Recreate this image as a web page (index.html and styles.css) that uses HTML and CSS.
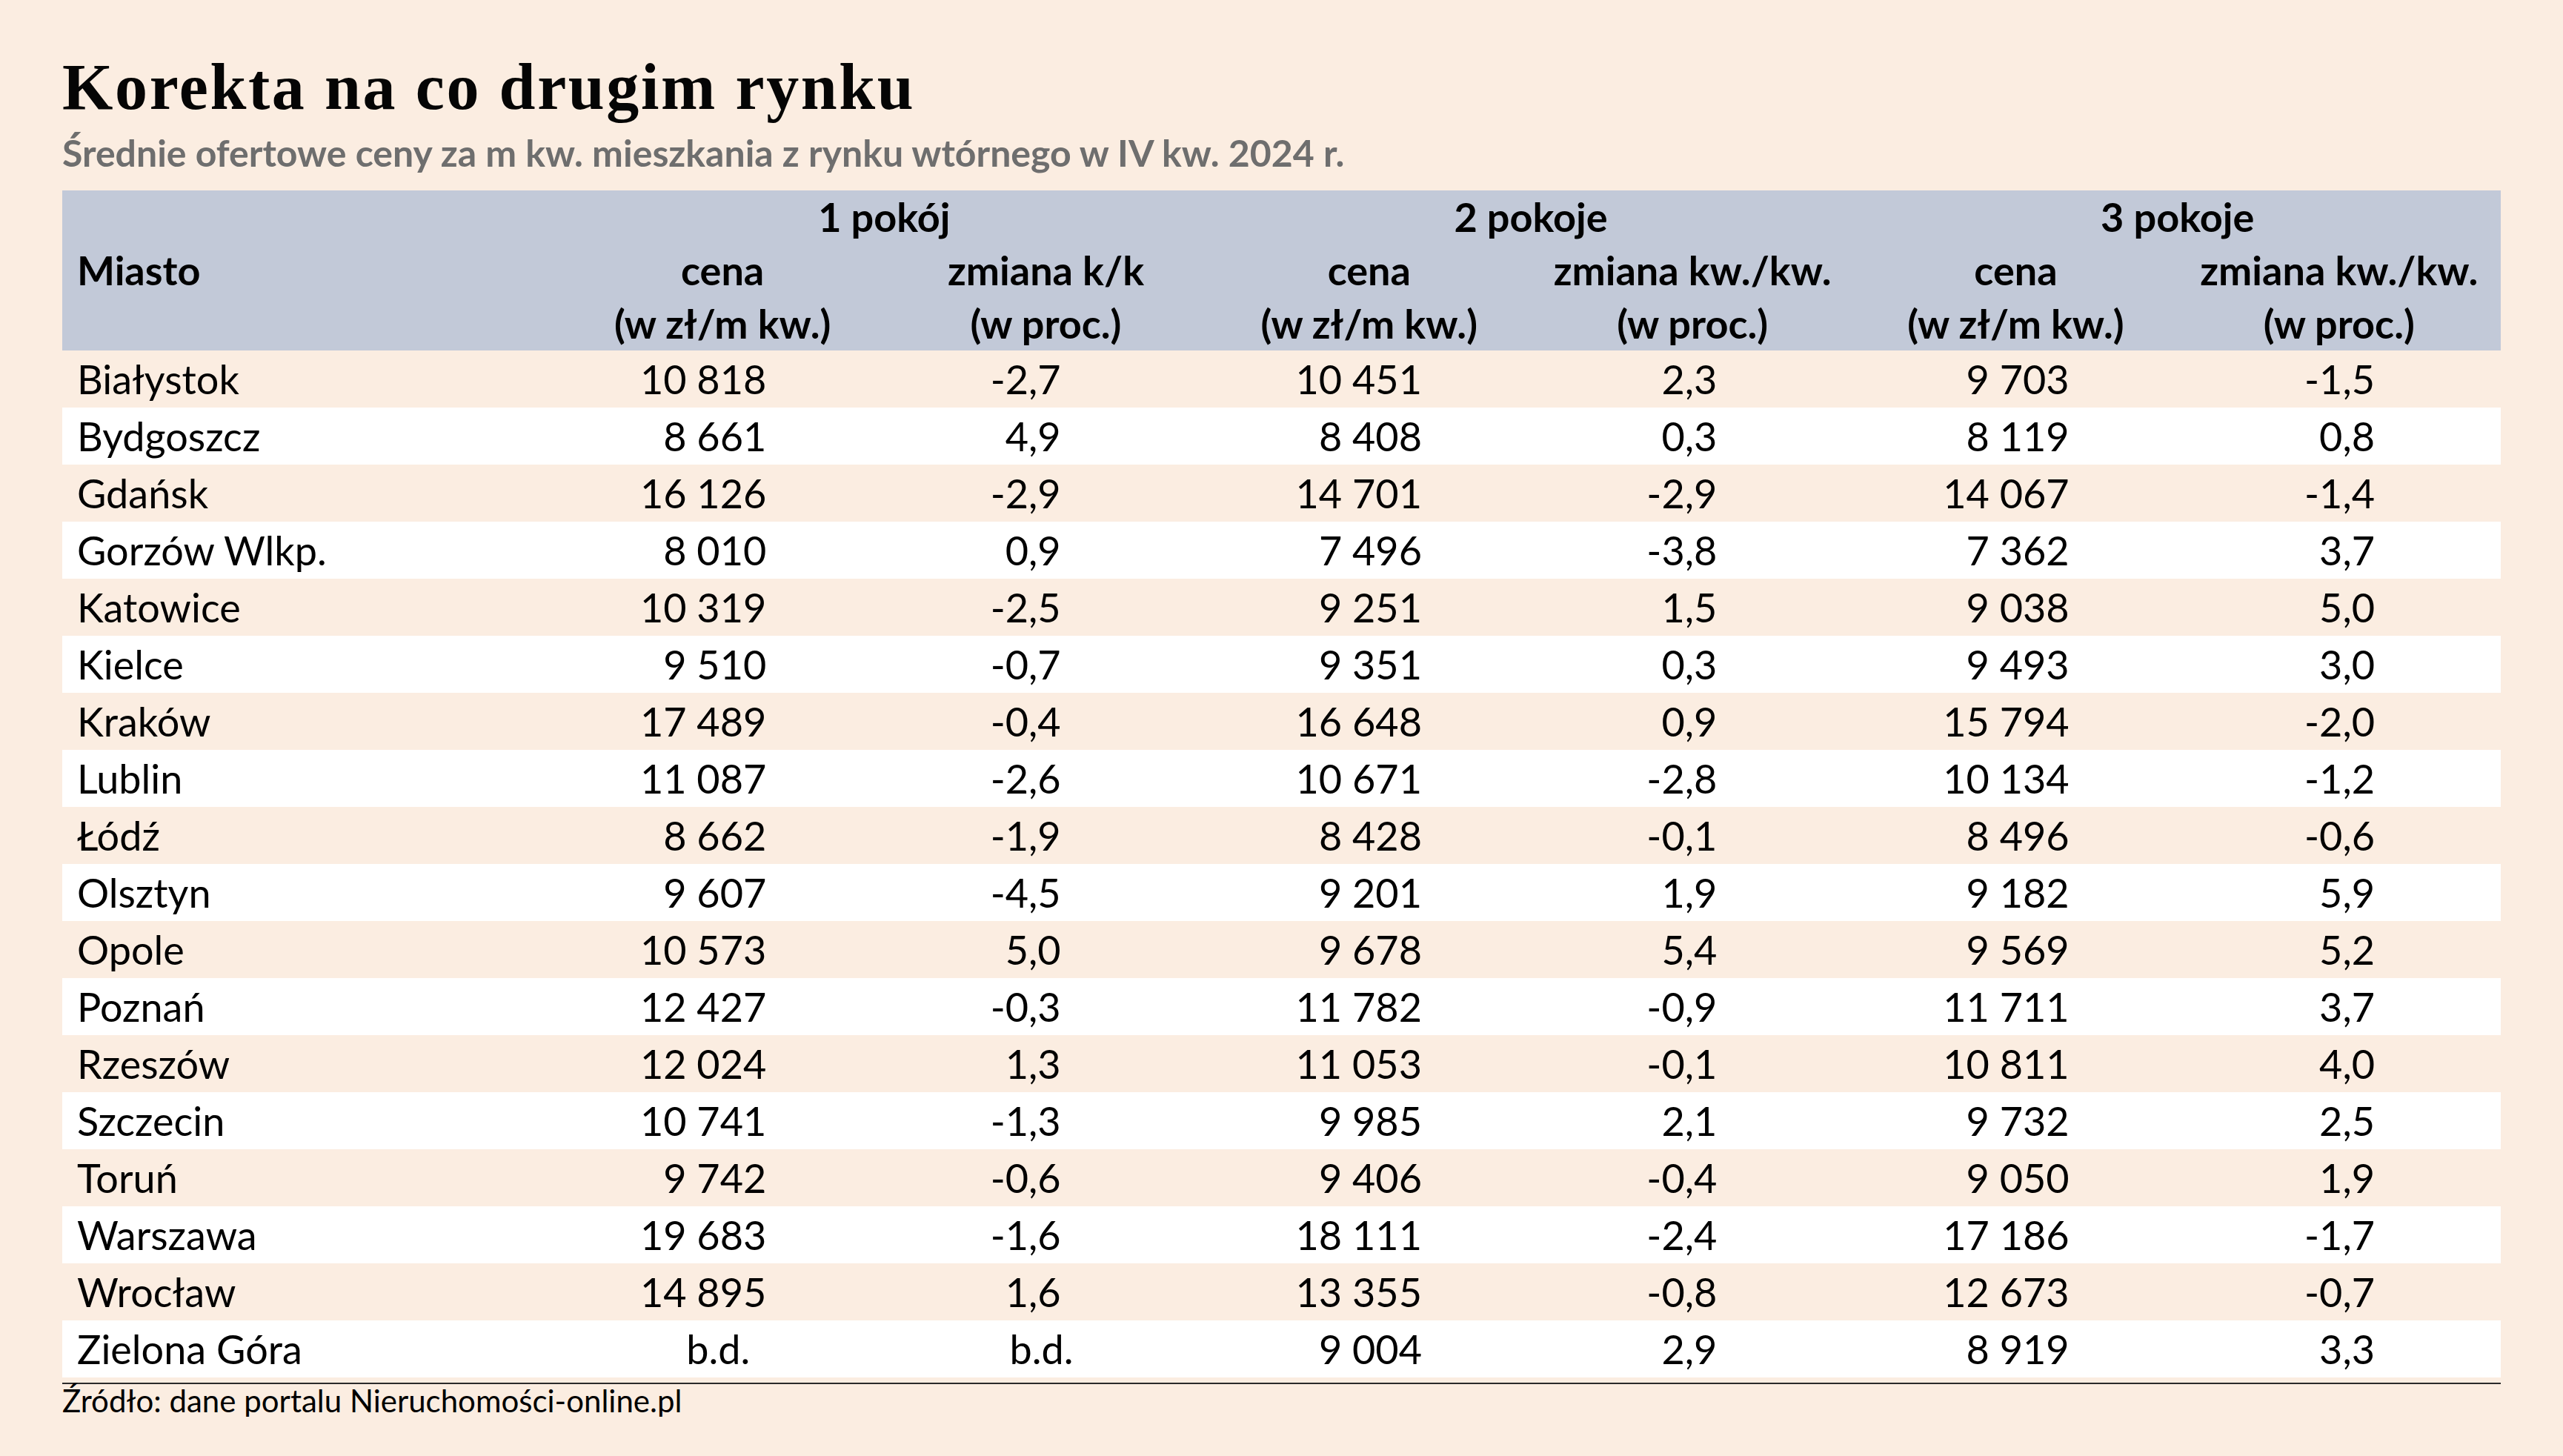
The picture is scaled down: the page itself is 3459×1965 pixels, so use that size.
FILE: index.html
```html
<!DOCTYPE html>
<html lang="pl">
<head>
<meta charset="utf-8">
<title>Korekta na co drugim rynku</title>
<link rel="stylesheet" href="styles.css">
</head>
<body>
<main class="graphic">
  <h1 class="title">Korekta na co drugim rynku</h1>
  <p class="subtitle">Średnie ofertowe ceny za m kw. mieszkania z rynku wtórnego w IV kw. 2024 r.</p>
  <table class="data">
    <colgroup>
      <col class="col-city">
      <col><col><col><col><col><col>
    </colgroup>
    <thead>
      <tr>
        <th class="city-head" rowspan="3">Miasto</th>
        <th colspan="2">1 pokój</th>
        <th colspan="2">2 pokoje</th>
        <th colspan="2">3 pokoje</th>
      </tr>
      <tr>
        <th>cena</th><th>zmiana k/k</th>
        <th>cena</th><th>zmiana kw./kw.</th>
        <th>cena</th><th>zmiana kw./kw.</th>
      </tr>
      <tr>
        <th>(w zł/m kw.)</th><th>(w proc.)</th>
        <th>(w zł/m kw.)</th><th>(w proc.)</th>
        <th>(w zł/m kw.)</th><th>(w proc.)</th>
      </tr>
    </thead>
    <tbody>
      <tr><td>Białystok</td><td>10 818</td><td>-2,7</td><td>10 451</td><td>2,3</td><td>9 703</td><td>-1,5</td></tr>
      <tr><td>Bydgoszcz</td><td>8 661</td><td>4,9</td><td>8 408</td><td>0,3</td><td>8 119</td><td>0,8</td></tr>
      <tr><td>Gdańsk</td><td>16 126</td><td>-2,9</td><td>14 701</td><td>-2,9</td><td>14 067</td><td>-1,4</td></tr>
      <tr><td>Gorzów Wlkp.</td><td>8 010</td><td>0,9</td><td>7 496</td><td>-3,8</td><td>7 362</td><td>3,7</td></tr>
      <tr><td>Katowice</td><td>10 319</td><td>-2,5</td><td>9 251</td><td>1,5</td><td>9 038</td><td>5,0</td></tr>
      <tr><td>Kielce</td><td>9 510</td><td>-0,7</td><td>9 351</td><td>0,3</td><td>9 493</td><td>3,0</td></tr>
      <tr><td>Kraków</td><td>17 489</td><td>-0,4</td><td>16 648</td><td>0,9</td><td>15 794</td><td>-2,0</td></tr>
      <tr><td>Lublin</td><td>11 087</td><td>-2,6</td><td>10 671</td><td>-2,8</td><td>10 134</td><td>-1,2</td></tr>
      <tr><td>Łódź</td><td>8 662</td><td>-1,9</td><td>8 428</td><td>-0,1</td><td>8 496</td><td>-0,6</td></tr>
      <tr><td>Olsztyn</td><td>9 607</td><td>-4,5</td><td>9 201</td><td>1,9</td><td>9 182</td><td>5,9</td></tr>
      <tr><td>Opole</td><td>10 573</td><td>5,0</td><td>9 678</td><td>5,4</td><td>9 569</td><td>5,2</td></tr>
      <tr><td>Poznań</td><td>12 427</td><td>-0,3</td><td>11 782</td><td>-0,9</td><td>11 711</td><td>3,7</td></tr>
      <tr><td>Rzeszów</td><td>12 024</td><td>1,3</td><td>11 053</td><td>-0,1</td><td>10 811</td><td>4,0</td></tr>
      <tr><td>Szczecin</td><td>10 741</td><td>-1,3</td><td>9 985</td><td>2,1</td><td>9 732</td><td>2,5</td></tr>
      <tr><td>Toruń</td><td>9 742</td><td>-0,6</td><td>9 406</td><td>-0,4</td><td>9 050</td><td>1,9</td></tr>
      <tr><td>Warszawa</td><td>19 683</td><td>-1,6</td><td>18 111</td><td>-2,4</td><td>17 186</td><td>-1,7</td></tr>
      <tr><td>Wrocław</td><td>14 895</td><td>1,6</td><td>13 355</td><td>-0,8</td><td>12 673</td><td>-0,7</td></tr>
      <tr><td>Zielona Góra</td><td class="na">b.d.</td><td class="na">b.d.</td><td>9 004</td><td>2,9</td><td>8 919</td><td>3,3</td></tr>
    </tbody>
  </table>
  <footer class="source">Źródło: dane portalu Nieruchomości-online.pl</footer>
</main>
</body>
</html>
```

FILE: styles.css
```css
html, body {
  margin: 0;
  padding: 0;
  background: #fbede1;
}

body {
  font-family: Lato, "Noto Sans", sans-serif;
  color: #000;
}

.graphic {
  width: 3291px;
  padding: 74px 0 0 84px;
}

.title {
  margin: 0;
  font-family: "Liberation Serif", serif;
  font-weight: 700;
  font-size: 88px;
  line-height: 88px;
  letter-spacing: 2.6px;
  color: #050505;
}

.subtitle {
  margin: 15px 0 0 0;
  font-size: 50px;
  line-height: 58px;
  font-weight: 700;
  color: #6e6e6e;
}

.data {
  margin-top: 22px;
  width: 3291px;
  table-layout: fixed;
  border-collapse: collapse;
  border-spacing: 0;
}

.data .col-city {
  width: 673px;
}

.data thead {
  background: #c2c9d8;
}

.data th {
  height: 72px;
  padding: 0;
  font-weight: 700;
  font-size: 54px;
  line-height: 72px;
  text-align: center;
  white-space: nowrap;
  vertical-align: middle;
}

.data th.city-head {
  text-align: left;
  padding-left: 20px;
}

.data td {
  height: 77px;
  padding: 0;
  font-size: 54px;
  line-height: 77px;
  text-align: right;
  white-space: nowrap;
  vertical-align: middle;
}

.data tbody tr:nth-child(odd) {
  background: #fbede1;
}

.data tbody tr:nth-child(even) {
  background: #ffffff;
}

.data td:nth-child(1) {
  text-align: left;
  padding-left: 20px;
}

.data td:nth-child(2) { padding-right: 159px; }
.data td:nth-child(3) { padding-right: 198px; }
.data td:nth-child(4) { padding-right: 147px; }
.data td:nth-child(5) { padding-right: 185px; }
.data td:nth-child(6) { padding-right: 146px; }
.data td:nth-child(7) { padding-right: 170px; }

.data td.na {
  text-align: center;
  padding-right: 12px;
}

.source {
  display: block;
  margin-top: 7px;
  border-top: 2px solid #2a2a2a;
  font-size: 42px;
  line-height: 44px;
}
```
